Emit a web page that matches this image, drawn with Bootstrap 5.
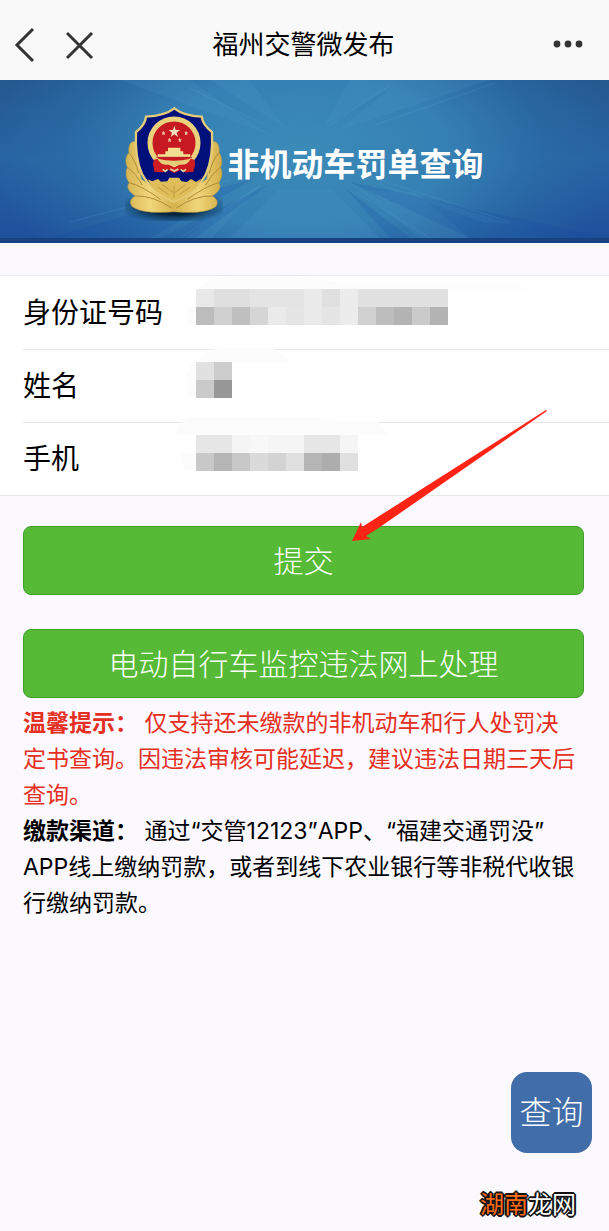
<!DOCTYPE html>
<html lang="zh-CN">
<head>
<meta charset="utf-8">
<meta name="viewport" content="width=device-width, initial-scale=1">
<title>福州交警微发布</title>
<link href="https://cdn.jsdelivr.net/npm/bootstrap@5.3.0/dist/css/bootstrap.min.css" rel="stylesheet">
<style>
  body { background: #fbf9fe; color: #000; font-family: Inter, "Noto Sans CJK SC", sans-serif; font-size: 23px; line-height: 36px; }
  .topbar { background: #f9f9f9; height: 80px; padding: 10px 24px 0 14px; }
  .topbar h1 { font-size: 26px; line-height: 36px; font-weight: 400; padding-right: 40px; }
  .bar-btn { border: 0; background: none; padding: 0; line-height: 0; }
  .hero { height: 163px; padding-top: 8px; overflow: hidden; border-bottom: 5px solid #17427e;
    background: radial-gradient(ellipse 52% 110% at 50% 45%, #3b8bb8 0%, #3580b4 45%, rgba(44,110,168,.6) 75%, rgba(32,82,145,0) 100%), linear-gradient(#24598f, #2763a3 50%, #1e509b); }
  .hero-rays { inset: 0; width: 100%; height: 100%; }
  .hero h2 { font-size: 32px; line-height: 40px; font-weight: 700; color: #fff; padding-top: 4px; }
  .fields { margin-top: 32px; background: #fff; border-top: 1px solid #e9e8eb; border-bottom: 1px solid #e9e8eb; padding-left: 23px; }
  .field-row { height: 73px; }
  .field-row + .field-row { border-top: 1px solid #e5e5e5; }
  .field-row label { width: 173px; flex: none; font-size: 28px; line-height: 40px; }
  .field-row input { height: 56px; border: 0; border-radius: 0; background: none; font-size: 28px; padding: 0; }
  .masked { left: 0; top: 4px; overflow: visible; pointer-events: none; }
  .actions { padding: 30px 25px 0 23px; gap: 34px; }
  .btn-go { --bs-btn-color: #fff; --bs-btn-bg: #56ba36; --bs-btn-border-color: #3fa128; --bs-btn-hover-color: #fff; --bs-btn-hover-bg: #4dab30; --bs-btn-hover-border-color: #3fa128;
    --bs-btn-font-size: 30px; --bs-btn-border-radius: 8px; height: 69px; line-height: 40px; font-weight: 300; }
  .pointer { left: calc(50% + 46px); top: -87px; pointer-events: none; }
  .notes { padding: 7px 30px 0 23px; }
  .notice { color: #e52f22; }
  .query-btn { right: 17px; bottom: 78px; width: 81px; height: 81px; border: 0; border-radius: 16px; background: #416da9; color: #fff; font-size: 32px; font-weight: 300; padding: 0; }
  .sitemark { right: 33px; bottom: 8px; font-size: 24px; line-height: 36px; font-weight: 400; color: #fff;
    text-shadow: -2px 0 #111, 2px 0 #111, 0 -2px #111, 0 2px #111, -1px -1px #111, 1px 1px #111, -1px 1px #111, 1px -1px #111; }
  .sitemark span { color: #ff6c17; }
</style>
</head>
<body>
<div class="position-relative min-vh-100">
  <header class="topbar d-flex align-items-center position-relative">
    <button class="bar-btn me-4" type="button" aria-label="返回"><svg width="28" height="36" fill="none" stroke="#333" stroke-width="3"><path d="M19 2 3 18 19 34"/></svg></button>
    <button class="bar-btn" type="button" aria-label="关闭"><svg width="28" height="36" fill="none" stroke="#333" stroke-width="3"><path d="M1 6 26 31M26 6 1 31"/></svg></button>
    <h1 class="flex-fill text-center mb-0">福州交警微发布</h1>
    <button class="bar-btn" type="button" aria-label="更多"><svg width="32" height="36" fill="#333"><circle cx="4" cy="17" r="3.4"/><circle cx="15" cy="17" r="3.4"/><circle cx="26" cy="17" r="3.4"/></svg></button>
  </header>

  <section class="hero position-relative d-flex justify-content-center align-items-center">
    <svg class="hero-rays position-absolute" viewBox="0 0 609 158" preserveAspectRatio="none" aria-hidden="true">
      <g fill="#6bb8df" opacity=".09">
        <path d="M120 0 270 55 190 0ZM210 0 285 48 250 0ZM490 0 340 50 400 0ZM405 0 325 45 350 0Z"/>
        <path d="M278 110 230 158 380 158 332 110ZM185 158 265 100 212 158ZM345 100 450 158 420 158ZM350 95 512 144 485 143ZM370 110 415 112 470 158 430 158Z"/>
      </g>
      <g fill="#1346a1" opacity=".17">
        <path d="M50 158 255 98 150 158ZM160 158 268 105 195 158ZM345 108 410 158 390 158ZM350 102 609 158 470 158Z"/>
      </g>
      <path d="M70 142 230 100M180 158 260 106M430 158 355 112M510 142 365 95M390 5 330 45M190 8 265 45M495 3 375 45" stroke="#80c5ec" opacity=".13" fill="none"/>
    </svg>
    <div class="d-flex align-items-center position-relative">
      <svg class="me-1 flex-shrink-0" width="98" height="115" viewBox="45 50 294 345" role="img" aria-label="警徽">
        <defs>
          <linearGradient id="gold" x1="0" x2="1"><stop stop-color="#d5b452"/><stop offset=".25" stop-color="#f1d77b"/><stop offset=".5" stop-color="#d6b34f"/><stop offset=".75" stop-color="#f0d67a"/><stop offset="1" stop-color="#d2ae48"/></linearGradient>
          <radialGradient id="shade"><stop offset=".45" stop-color="#031d33" stop-opacity=".95"/><stop offset="1" stop-color="#08355a" stop-opacity="0"/></radialGradient>
        </defs>
        <ellipse cx="192" cy="352" rx="165" ry="52" fill="url(#shade)"/>
        <g fill="url(#gold)" stroke="#b99a44" stroke-width="2">
          <path d="M76 158C58 152 55 178 57 190 45 201 46 225 53 234 45 248 48 268 58 280 46 294 60 310 77 320 61 326 57 340 67 352 98 373 153 370 192 367 231 370 288 373 317 352 327 340 320 326 306 320 323 310 337 294 326 280 336 268 339 248 331 234 338 225 336 201 327 190 329 178 325 152 308 158L290 270 192 330 94 270Z"/>
          <path d="M58 192Q77 215 86 252M53 234Q78 252 97 287M58 280Q100 292 151 330M77 320Q128 318 185 356M327 190Q306 215 298 252M331 234Q306 252 287 287M326 280Q284 292 233 330M306 320Q255 318 199 356" fill="none" stroke="#b08c3a" stroke-width="3"/>
        </g>
        <path d="M193 57Q165 79 108 82 106 107 78 128 74 207 96 254 125 308 192 337 259 308 288 254 310 207 306 128 278 107 275 82 220 79 193 57Z" fill="#00107a" stroke="#e6cc78" stroke-width="7"/>
        <path d="M113 270 127 276 144 269 153 277 172 276 178 265 207 265 214 276 231 278 243 269 258 278 273 268 260 294Q229 320 192 335 154 320 126 294Z" fill="#dfbd58"/>
        <path d="M143 293 175 315M157 286 191 311M192 326V289M241 293 209 315M226 286 193 311" stroke="#c09b40" stroke-width="3"/>
        <path d="M137 205 246 205 255 224 250 247 226 249 213 240 193 251 173 240 157 249 134 246 130 225Z" fill="#c91c21"/>
        <ellipse cx="192" cy="161" rx="72" ry="72" fill="#c61922" stroke="#ecd17c" stroke-width="15"/>
        <path d="M131 212 149 206 178 226 193 234 207 226 236 206 254 212 255 226 249 248 226 249 213 241 193 250 173 241 157 249 134 247 129 226Z" fill="#cd1c22"/>
        <path d="m193 109 4 13h13l-10 8 4 13-11-8-11 8 4-13-10-8h13Z" fill="#f3dfbf"/>
        <path d="m160 126 3 10-6-6h8l-7 6ZM228 126l3 10-6-6h8l-7 6ZM178 147l3 10-6-6h8l-7 6ZM209 147l3 10-6-6h8l-7 6Z" fill="#efc8a1" stroke="#efc8a1" stroke-width="2"/>
        <path d="M174 175h37v11h9v9h21v9h-98v-9h23v-9h8Z" fill="#f2df91"/>
        <path d="M142 208Q192 220 242 208 232 230 207 226L193 234 178 226Q153 230 142 208Z" fill="#e8ce78"/>
        <path d="M139 204h107" stroke="#b51a20" stroke-width="3"/>
        <path d="M158 240 166 246 173 240M228 240 220 246 212 240M181 239 193 245 205 239" fill="none" stroke="#e2d1a2" stroke-width="5"/>
      </svg>
      <h2 class="mb-0">非机动车罚单查询</h2>
    </div>
  </section>

  <form onsubmit="return false">
    <div class="fields">
      <div class="field-row d-flex align-items-center">
        <label for="idno">身份证号码</label>
        <div class="flex-fill position-relative">
          <input class="form-control shadow-none" id="idno" type="text">
          <svg class="masked position-absolute" width="252" height="36" shape-rendering="crispEdges" aria-hidden="true">
            <path d="M2 0Q12-13 50-13Q100-13 140-7H320L332 0ZM-9 18H0V36H-9Z" fill="#fcfcfc"/>
            <path fill="#e8e8e8" d="M0 0h18v18H0z"/><path fill="#dfdfdf" d="M18 0h36v18H18z"/><path fill="#e4e4e4" d="M54 0h54v18H54z"/><path fill="#eaeaea" d="M108 0h18v18h-18z"/><path fill="#e0e0e0" d="M126 0h18v18h-18z"/><path fill="#ececec" d="M144 0h18v36h-18z"/><path fill="#e1e1e1" d="M162 0h90v18h-90z"/>
            <path fill="#bcbcbc" d="M0 18h18v18H0z"/><path fill="#d0d0d0" d="M18 18h18v18H18z"/><path fill="#bfbfbf" d="M36 18h18v18H36z"/><path fill="#d5d5d5" d="M54 18h18v18H54z"/><path fill="#eaeaea" d="M72 18h18v18H72zM108 18h18v18h-18z"/><path fill="#e5e5e5" d="M90 18h18v18H90zM126 18h18v18h-18z"/><path fill="#d1d1d1" d="M162 18h18v18h-18z"/><path fill="#bdbdbd" d="M180 18h18v18h-18z"/><path fill="#b3b3b3" d="M198 18h18v18h-18zM234 18h18v18h-18z"/><path fill="#cacaca" d="M216 18h18v18h-18z"/>
          </svg>
        </div>
      </div>
      <div class="field-row d-flex align-items-center">
        <label for="uname">姓名</label>
        <div class="flex-fill position-relative">
          <input class="form-control shadow-none" id="uname" type="text">
          <svg class="masked position-absolute" width="36" height="36" shape-rendering="crispEdges" aria-hidden="true">
            <path d="M-1 0Q8-12 25-14H77L96 0ZM-10 14-4 0H0V36H-8Z" fill="#fcfcfc"/>
            <path fill="#e1e1e1" d="M0 0h18v18H0z"/><path fill="#cdcdcd" d="M18 0h18v18H18z"/><path fill="#cacaca" d="M0 18h18v18H0z"/><path fill="#979797" d="M18 18h18v18H18z"/>
          </svg>
        </div>
      </div>
      <div class="field-row d-flex align-items-center">
        <label for="phone">手机</label>
        <div class="flex-fill position-relative">
          <input class="form-control shadow-none" id="phone" type="tel">
          <svg class="masked position-absolute" width="162" height="36" shape-rendering="crispEdges" aria-hidden="true">
            <path d="M-22 0Q-20-8-8-18H120L150-13H182L195 0ZM-18 18H0V36H-10Z" fill="#fcfcfc"/>
            <path fill="#e6e6e6" d="M0 0h36v18H0zM108 0h36v18h-36z"/><path fill="#f5f5f5" d="M36 0h18v18H36zM72 0h36v18H72zM144 0h18v18h-18z"/><path fill="#f8f8f8" d="M54 0h18v18H54z"/>
            <path fill="#c8c8c8" d="M0 18h18v18H0zM36 18h18v18H36z"/><path fill="#b5b5b5" d="M18 18h18v18H18zM108 18h18v18h-18z"/><path fill="#dadada" d="M54 18h18v18H54z"/><path fill="#d3d3d3" d="M72 18h18v18H72z"/><path fill="#e0e0e0" d="M90 18h18v18H90zM144 18h18v18h-18z"/><path fill="#adadad" d="M126 18h18v18h-18z"/>
          </svg>
        </div>
      </div>
    </div>

    <div class="actions position-relative d-grid">
      <button class="btn btn-go" type="submit">提交</button>
      <button class="btn btn-go" type="button">电动自行车监控违法网上处理</button>
      <svg class="pointer position-absolute" width="196" height="133" aria-hidden="true"><path d="M1 132 10 113 11 118 195 1 196 2 29 118 15 127 20 130Z" fill="#ff2315"/></svg>
    </div>
  </form>

  <section class="notes">
    <p class="notice mb-0"><b>温馨提示：</b> <span>仅支持还未缴款的非机动车和行人处罚决定书查询。因违法审核可能延迟，建议违法日期三天后查询。</span></p>
    <p class="mb-0"><b>缴款渠道：</b> <span>通过“交管12123”APP、“福建交通罚没”APP线上缴纳罚款，或者到线下农业银行等非税代收银行缴纳罚款。</span></p>
  </section>

  <button class="query-btn position-absolute" type="button">查询</button>
  <div class="sitemark position-absolute"><span>湖南</span>龙网</div>
</div>
<script src="https://cdn.jsdelivr.net/npm/bootstrap@5.3.0/dist/js/bootstrap.bundle.min.js"></script>
</body>
</html>
